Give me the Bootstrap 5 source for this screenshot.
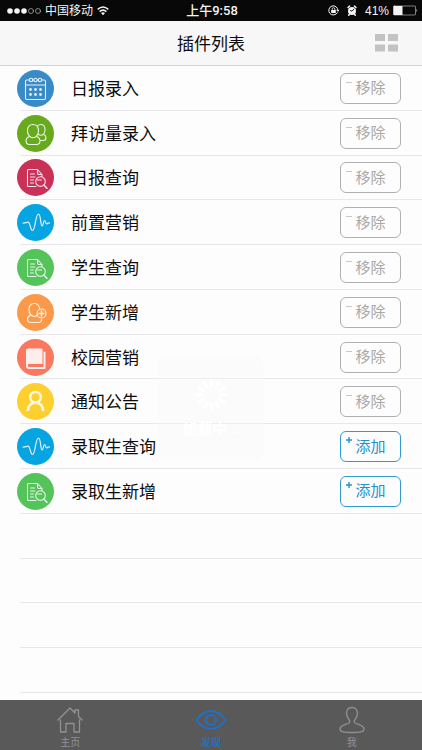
<!DOCTYPE html>
<html lang="zh-CN">
<head>
<meta charset="utf-8">
<meta name="viewport" content="width=device-width, initial-scale=1">
<title>插件列表</title>
<link href="https://cdn.jsdelivr.net/npm/bootstrap@5.3.0/dist/css/bootstrap.min.css" rel="stylesheet">
<style>
body{font-family:"Liberation Sans","Noto Sans CJK SC",sans-serif;background:#fdfdfd;color:#0c0c0c}
svg{display:block;fill:none;stroke:currentColor;stroke-linecap:round;stroke-linejoin:round}
.status-bar{height:21px;background:#080808;color:#f4f4f4;font-size:12px;line-height:20px;display:grid;grid-template-columns:1fr auto 1fr;padding:0 4px 0 6px}
.status-clock{font-family:Roboto,"Noto Sans CJK SC",sans-serif;font-weight:500;font-size:13px}
.title-bar{height:45px;background:#f7f7f7;border-bottom:1px solid #d4d4d4}
.title-bar h1{font-size:17px;line-height:24px;font-weight:400;padding-top:3px}
.grid-btn{right:24px;color:#c3c3c3}
.plugin-list{padding-bottom:7px}
.plugin-row{flex:1 0 44px;padding-left:17px;padding-right:21px}
.plugin-row::after{content:"";position:absolute;left:20px;right:0;bottom:0;height:1px;background:#e8e8ec}
.disc{width:37px;height:37px;color:#fff}
.disc svg{width:37px;height:37px;stroke-width:1.1;opacity:.88}
.c-blue{background:#398bc8}.c-lime{background:#68aa1d}.c-red{background:#c93256}.c-cyan{background:#06a4e0}
.c-green{background:#54c45a}.c-orange{background:#fa994a}.c-coral{background:#fa7860}.c-yellow{background:#fdd02f}
.plugin-name{font-size:17px;line-height:24px;margin-left:17px;padding-top:3px}
.act{width:61px;height:31px;border:1px solid #b0b0b0;border-radius:6px;background:none;color:#a8a8a8;font-size:15px;line-height:28px;padding:0}
.act-add{border-color:#3299d3;color:#2491cf}
.act svg{left:4px;top:4px;width:8px;height:8px;stroke-linecap:butt}
.act:not(.act-add) svg{opacity:.6}
.toast-box{width:105px;height:103px;left:50%;top:291px;transform:translateX(-50%);border-radius:8px;background:rgba(245,245,245,.35);color:#fff;padding-top:20px;gap:4px;pointer-events:none}
.toast-box svg{width:36px;height:36px}
.toast-box span{font-size:15px;line-height:24px}
.tab-strip{height:50px;background:#595959}
.tab-item{flex:1 1 0;color:#929292;font-size:10px;line-height:14px;padding-top:6px;text-decoration:none}
.tab-item.current{color:#2170c4}
.tab-item svg{width:32px;height:28px;margin-bottom:2px}
</style>
<script src="https://cdn.jsdelivr.net/npm/bootstrap@5.3.0/dist/js/bootstrap.bundle.min.js"></script>
</head>
<body class="d-flex flex-column min-vh-100">
<svg class="d-none" aria-hidden="true">
<symbol id="i-cal" viewBox="0 0 37 37"><path d="M12 10H10a1.500 1.500 0 0 0-1.500 1.500V28a1.500 1.500 0 0 0 1.500 1.500h17a1.500 1.500 0 0 0 1.500-1.500V11.500A1.500 1.500 0 0 0 27 10H25M8.500 15h20M16 10h.5M20.500 10h.5"/><circle cx="14" cy="10" r="1.700"/><circle cx="18.500" cy="10" r="1.700"/><circle cx="23" cy="10" r="1.700"/><path stroke-width="2.800" d="M13.500 19.500h0M18.500 19.500h0M23.500 19.500h0M13.500 24.500h0M18.500 24.500h0M23.500 24.500h0"/></symbol>
<symbol id="i-people" viewBox="0 0 37 37"><path d="M16 9.500c-3.600 0-5.500 2.800-5.500 6.200 0 3.700 2.300 7 5.500 7s5.500-3.300 5.500-7c0-3.400-1.900-6.200-5.500-6.200zM12.300 21.500c-1.800.8-3.300 1.800-3.300 4.300 0 2.600 1.500 3.700 3.500 3.700h7c2 0 3.500-1.100 3.500-3.700 0-2.500-1.500-3.500-3.300-4.300M20.500 11c.9-1 2-1.500 3.200-1.500 2.800 0 4.300 2.300 4.300 5.200 0 3-1.700 5.500-4.300 5.500-.9 0-1.700-.3-2.400-.8M26.500 19.200c1.500.8 2.500 1.800 2.500 3.600 0 2-1.200 2.700-2.700 2.700h-3"/></symbol>
<symbol id="i-doc" viewBox="0 0 37 37"><path d="M19 27.500h-7.500a1 1 0 0 1-1-1v-15a1 1 0 0 1 1-1h9l4.500 5v2M20.500 10.500V14a1.500 1.500 0 0 0 1.500 1.500h3M13.500 15h4M13.500 18h4.500M13.500 21h3M13.500 24h3M20.500 21h4"/><circle cx="23.500" cy="22.500" r="4.800"/><path d="M26.800 26l1 1M28 27.200l2 2" stroke-width="1.500"/></symbol>
<symbol id="i-wave" viewBox="0 0 37 37"><path stroke-width="1.200" d="M6 19c2 .3 3.500-.8 5-.8 2.400 0 2.200 8.300 4.500 8.300 3 0 2.800-16.500 6-16.500 2.500 0 1.800 12 3.600 12 1.400 0 1.100-5.500 2.400-5.500 1.100 0 1 3.500 2.200 3.500.7 0 .9-1.200 1.500-1.200.5 0 .8.400 1.300.4"/></symbol>
<symbol id="i-plus" viewBox="0 0 37 37"><path d="M20.800 20.500c-.9 1.300-2.100 2-3.500 2-3.200 0-5.300-3.200-5.300-6.800 0-3.600 2-6.200 5.300-6.200 2.900 0 4.800 2 5.200 5M13.500 21.300c-1.800.8-3 1.900-3 4 0 2.400 1.300 3.200 3.200 3.200H21.300c2 0 3.300-.8 3.300-3.200"/><circle cx="24.500" cy="19.500" r="4.500"/><path stroke-width="1.500" d="M22 19.500h5M24.500 17v5"/></symbol>
<symbol id="i-book" viewBox="0 0 37 37"><path fill="currentColor" stroke="none" d="M11 9.500h13.500a1 1 0 0 1 1 1V25H12a3 3 0 0 0-2.500 1V11a1.500 1.500 0 0 1 1.500-1.500z"/><path stroke-width="2" d="M27.500 13.500V29H12.300A2.300 2.300 0 0 1 10 26.700V11"/></symbol>
<symbol id="i-user" viewBox="0 0 37 37"><circle cx="18.500" cy="14.200" r="5.300" stroke-width="2.500"/><path stroke-width="2.700" stroke-linecap="butt" d="M10.800 28c.3-5 3.200-8.300 7.700-8.300s7.400 3.300 7.700 8.300"/></symbol>
<symbol id="i-minus" viewBox="0 0 8 8"><path d="M1 4.500h6"/></symbol>
<symbol id="i-add" viewBox="0 0 8 8"><path stroke-width="1.400" d="M1 4h6M4 1v6"/></symbol>
</svg>
<div class="status-bar align-items-center">
  <div class="d-flex align-items-center gap-1">
    <svg width="35" height="8" viewBox="0 0 35 8" role="img" aria-label="信号"><g fill="currentColor" stroke="none"><circle cx="4" cy="4" r="2.800"/><circle cx="11" cy="4" r="2.800"/><circle cx="18" cy="4" r="2.800"/></g><g stroke-width=".7" opacity=".75"><circle cx="25" cy="4" r="2.500"/><circle cx="32" cy="4" r="2.500"/></g></svg>
    <span>中国移动</span>
    <svg width="12" height="10" viewBox="0 0 12 10" role="img" aria-label="Wi-Fi"><path stroke-width="1.500" stroke-linecap="butt" d="M.7 3.400Q6-1.400 11.300 3.400M2.600 5.600Q6 2.600 9.400 5.600"/><path fill="currentColor" stroke="none" d="M4 7q2-1.600 4 0L6 9.300z"/></svg>
  </div>
  <span class="status-clock">上午9:58</span>
  <div class="d-flex align-items-center justify-content-end">
    <svg width="11" height="11" viewBox="0 0 11 11" role="img" aria-label="方向锁定"><path d="M9.400 7.700A4.600 4.600 0 1 1 10 5.500M8.700 5l1.300 1.300L11 5"/><path fill="currentColor" stroke="none" d="M3.200 5h4.600v3H3.200z"/><path stroke-width=".8" d="M4.200 5V4a1.300 1.300 0 0 1 2.600 0v1"/></svg>
    <svg class="ms-2" width="10" height="11" viewBox="0 0 10 11" role="img" aria-label="闹钟"><circle cx="5" cy="6" r="4" fill="currentColor" stroke="none"/><path stroke-width="1.500" d="M1 2.500L2.600 1M9 2.500L7.400 1M2.300 9.500l-.6.700M7.700 9.500l.6.700"/><path stroke="#080808" stroke-width=".9" d="M7 4L5 6.200 3.500 5.500"/></svg>
    <span class="ms-2">41%</span>
    <svg class="ms-1" width="25" height="11" viewBox="0 0 25 11" role="img" aria-label="电量 41%"><rect x=".5" y="1" width="22" height="9" rx="1" stroke-width=".8" opacity=".65"/><path fill="currentColor" stroke="none" d="M.5 1h9v9h-9zM23.500 4q1.500 1.500 0 3z"/></svg>
  </div>
</div>
<header class="title-bar position-relative d-flex align-items-center justify-content-center">
  <h1 class="m-0">插件列表</h1>
  <button type="button" class="grid-btn btn p-0 border-0 position-absolute" aria-label="切换视图"><svg width="23" height="18" viewBox="0 0 23 18"><path fill="currentColor" stroke="none" d="M0 0h10v7H0zM13 0h10v7H13zM0 10.500h10v7H0zM13 10.500h10v7H13z"/></svg></button>
</header>
<main class="flex-grow-1 d-flex flex-column position-relative">
<ul class="plugin-list list-unstyled m-0 flex-grow-1 d-flex flex-column">
  <li class="plugin-row position-relative d-flex align-items-center"><span class="disc c-blue rounded-circle"><svg><use href="#i-cal"/></svg></span><span class="plugin-name">日报录入</span><button type="button" class="act position-relative ms-auto"><svg class="position-absolute"><use href="#i-minus"/></svg>移除</button></li>
  <li class="plugin-row position-relative d-flex align-items-center"><span class="disc c-lime rounded-circle"><svg><use href="#i-people"/></svg></span><span class="plugin-name">拜访量录入</span><button type="button" class="act position-relative ms-auto"><svg class="position-absolute"><use href="#i-minus"/></svg>移除</button></li>
  <li class="plugin-row position-relative d-flex align-items-center"><span class="disc c-red rounded-circle"><svg><use href="#i-doc"/></svg></span><span class="plugin-name">日报查询</span><button type="button" class="act position-relative ms-auto"><svg class="position-absolute"><use href="#i-minus"/></svg>移除</button></li>
  <li class="plugin-row position-relative d-flex align-items-center"><span class="disc c-cyan rounded-circle"><svg><use href="#i-wave"/></svg></span><span class="plugin-name">前置营销</span><button type="button" class="act position-relative ms-auto"><svg class="position-absolute"><use href="#i-minus"/></svg>移除</button></li>
  <li class="plugin-row position-relative d-flex align-items-center"><span class="disc c-green rounded-circle"><svg><use href="#i-doc"/></svg></span><span class="plugin-name">学生查询</span><button type="button" class="act position-relative ms-auto"><svg class="position-absolute"><use href="#i-minus"/></svg>移除</button></li>
  <li class="plugin-row position-relative d-flex align-items-center"><span class="disc c-orange rounded-circle"><svg><use href="#i-plus"/></svg></span><span class="plugin-name">学生新增</span><button type="button" class="act position-relative ms-auto"><svg class="position-absolute"><use href="#i-minus"/></svg>移除</button></li>
  <li class="plugin-row position-relative d-flex align-items-center"><span class="disc c-coral rounded-circle"><svg><use href="#i-book"/></svg></span><span class="plugin-name">校园营销</span><button type="button" class="act position-relative ms-auto"><svg class="position-absolute"><use href="#i-minus"/></svg>移除</button></li>
  <li class="plugin-row position-relative d-flex align-items-center"><span class="disc c-yellow rounded-circle"><svg><use href="#i-user"/></svg></span><span class="plugin-name">通知公告</span><button type="button" class="act position-relative ms-auto"><svg class="position-absolute"><use href="#i-minus"/></svg>移除</button></li>
  <li class="plugin-row position-relative d-flex align-items-center"><span class="disc c-cyan rounded-circle"><svg><use href="#i-wave"/></svg></span><span class="plugin-name">录取生查询</span><button type="button" class="act act-add position-relative ms-auto"><svg class="position-absolute"><use href="#i-add"/></svg>添加</button></li>
  <li class="plugin-row position-relative d-flex align-items-center"><span class="disc c-green rounded-circle"><svg><use href="#i-doc"/></svg></span><span class="plugin-name">录取生新增</span><button type="button" class="act act-add position-relative ms-auto"><svg class="position-absolute"><use href="#i-add"/></svg>添加</button></li>
  <li class="plugin-row position-relative"></li>
  <li class="plugin-row position-relative"></li>
  <li class="plugin-row position-relative"></li>
  <li class="plugin-row position-relative"></li>
</ul>
<div class="toast-box position-absolute d-flex flex-column align-items-center" role="status">
  <svg viewBox="-18 -18 36 36" stroke-width="3"><g id="spoke"><path d="M0-9v-6M0 9v6M9 0h6M-9 0h-6"/></g><use href="#spoke" transform="rotate(30)"/><use href="#spoke" transform="rotate(60)"/></svg>
  <span class="fw-bold">加载中...</span>
</div>
</main>
<nav class="tab-strip d-flex" aria-label="主导航">
  <a href="#home" class="tab-item d-flex flex-column align-items-center"><svg viewBox="0 0 32 28" stroke-width="1.300"><path d="M4 14L16 2l5 5V4h3.500v6.500L28 14M6.500 14v12H12v-8.500h8V26h5.500V14"/></svg>主页</a>
  <a href="#discover" class="tab-item current d-flex flex-column align-items-center" aria-current="page"><svg viewBox="0 0 32 28" stroke-width="2"><path d="M1.500 14Q8 5 16 5t14.500 9Q24 23 16 23T1.500 14z"/><circle cx="16" cy="14" r="5"/></svg><span class="fw-bold">发现</span></a>
  <a href="#me" class="tab-item d-flex flex-column align-items-center"><svg viewBox="0 0 32 28" stroke-width="1.300"><path d="M16 1.500c-3.600 0-5.500 2.500-5.500 6 0 3 1.500 4.700 2.700 6.300.9 1.200.6 3-1 3.700-3 1.200-8.200 2-8.200 5.500 0 3 3.500 3.500 12 3.500s12-.5 12-3.500c0-3.500-5.200-4.300-8.200-5.500-1.600-.7-1.900-2.500-1-3.700 1.200-1.600 2.700-3.300 2.700-6.300 0-3.500-1.900-6-5.500-6z"/></svg>我</a>
</nav>
</body>
</html>
